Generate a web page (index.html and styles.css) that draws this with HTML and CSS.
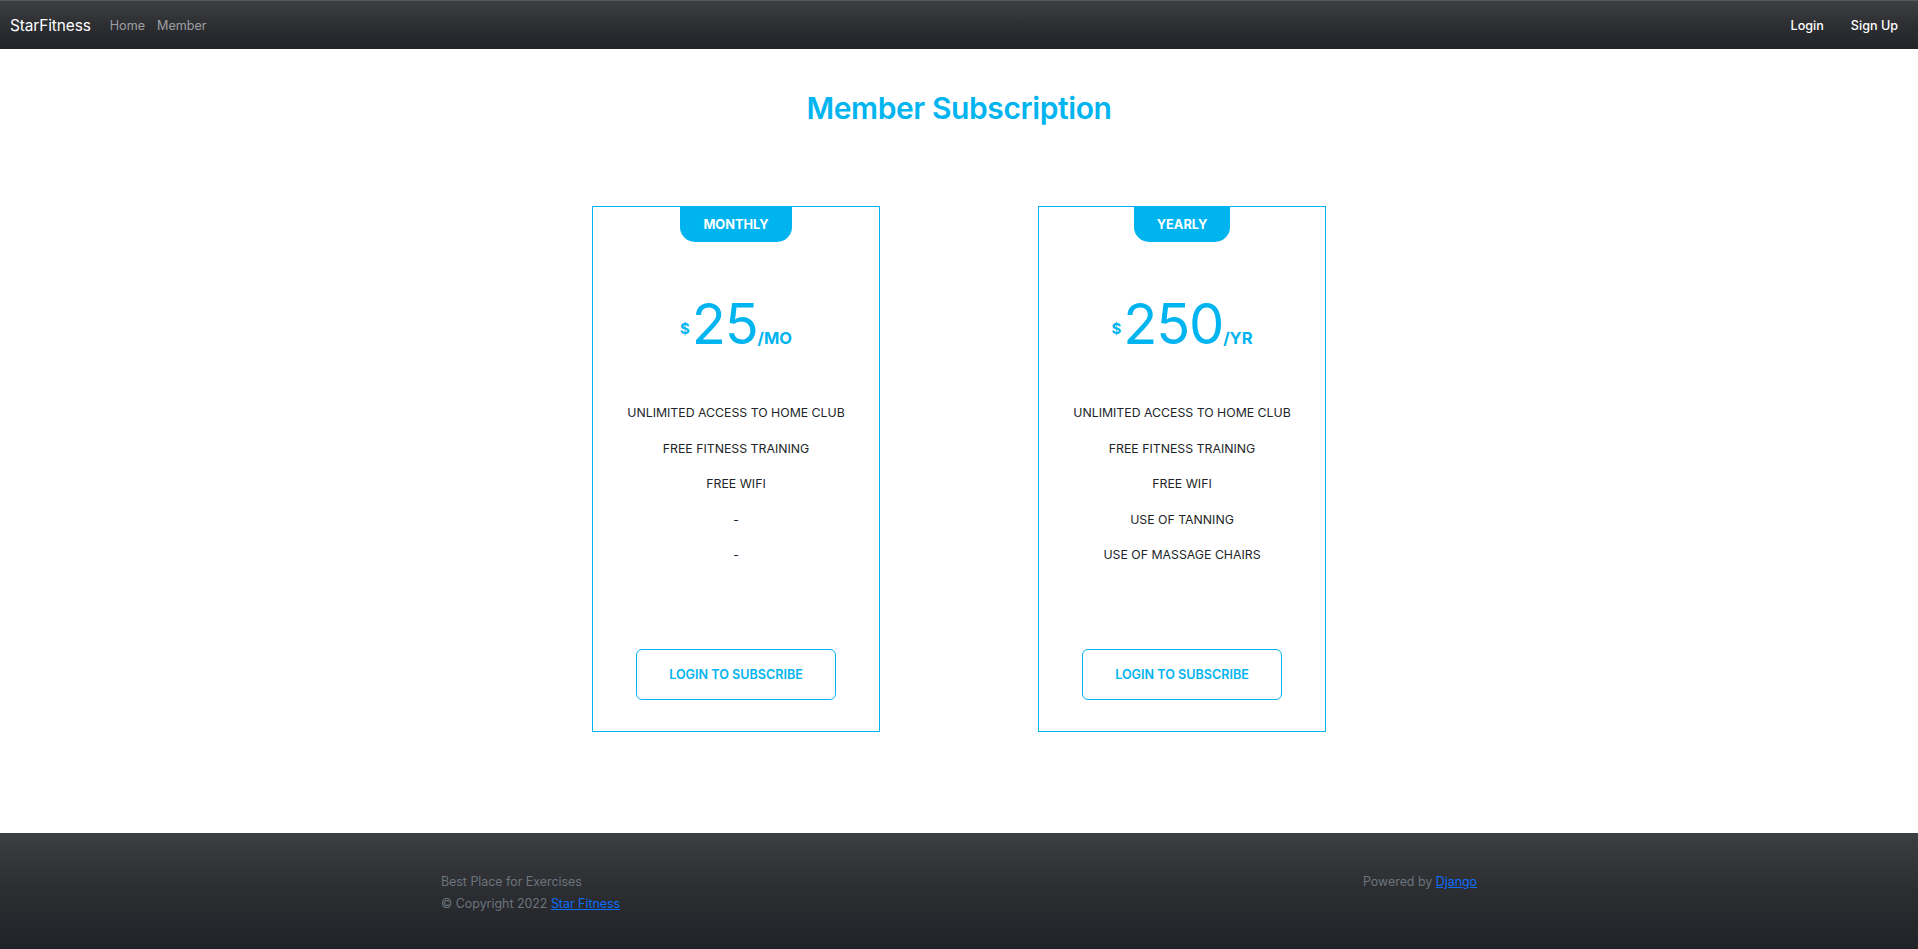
FILE: index.html
```html
<!DOCTYPE html>
<html lang="en">
<head>
<meta charset="utf-8">
<title>StarFitness</title>
<link rel="stylesheet" href="styles.css">
</head>
<body>
<nav class="navbar">
  <div class="nav-left">
    <a class="brand" href="#">StarFitness</a>
    <a class="nav-link" href="#">Home</a>
    <a class="nav-link" href="#">Member</a>
  </div>
  <div class="nav-right">
    <a class="nav-link light" href="#">Login</a>
    <a class="nav-link light" href="#">Sign Up</a>
  </div>
</nav>
<main class="main">
  <h1 class="title">Member Subscription</h1>
  <div class="plans">
    <div class="card">
      <div class="badge">MONTHLY</div>
      <div class="price"><span class="cur">$</span><span class="amount">25</span><span class="per">/MO</span></div>
      <ul class="features">
        <li>UNLIMITED ACCESS TO HOME CLUB</li>
        <li>FREE FITNESS TRAINING</li>
        <li>FREE WIFI</li>
        <li>-</li>
        <li>-</li>
      </ul>
      <a class="btn" href="#">LOGIN TO SUBSCRIBE</a>
    </div>
    <div class="card">
      <div class="badge">YEARLY</div>
      <div class="price"><span class="cur">$</span><span class="amount">250</span><span class="per">/YR</span></div>
      <ul class="features">
        <li>UNLIMITED ACCESS TO HOME CLUB</li>
        <li>FREE FITNESS TRAINING</li>
        <li>FREE WIFI</li>
        <li>USE OF TANNING</li>
        <li>USE OF MASSAGE CHAIRS</li>
      </ul>
      <a class="btn" href="#">LOGIN TO SUBSCRIBE</a>
    </div>
  </div>
</main>
<footer class="footer">
  <div class="footer-inner">
    <div class="footer-left">
      <div>Best Place for Exercises</div>
      <div>&copy; Copyright 2022 <a href="#">Star Fitness</a></div>
    </div>
    <div class="footer-right">Powered by <a href="#">Django</a></div>
  </div>
</footer>
</body>
</html>
```
FILE: styles.css
```css
* { box-sizing: border-box; }
html, body { margin: 0; padding: 0; }
body {
  font-family: Inter, Roboto, "Liberation Sans", sans-serif;
  color: #212529;
  background: #fff;
  height: 949px;
  overflow: hidden;
}
a { text-decoration: none; }

.navbar {
  height: 49px;
  display: flex;
  align-items: center;
  justify-content: space-between;
  padding: 0 20px 0 10px;
  background: linear-gradient(to bottom, #3d3f43 0%, #2c2e32 50%, #212428 100%);
  border-top: 1px solid #55575b;
}
.nav-left, .nav-right { display: flex; align-items: center; }
.brand {
  color: #fff;
  font-size: 15.4px;
  margin-right: 19px;
  letter-spacing: -0.1px;
}
.nav-link {
  color: rgba(255,255,255,0.55);
  font-size: 12.6px;
  margin-right: 12px;
}
.nav-right .nav-link { margin-right: 0; margin-left: 27px; }
.nav-link.light { color: #fff; font-weight: 500; }

.main {
  height: 784px;
  padding-top: 40px;
}
.title {
  margin: 0;
  text-align: center;
  font-size: 30px;
  line-height: 38px;
  font-weight: 600;
  letter-spacing: -0.4px;
  color: #00b4f0;
}
.plans {
  margin-top: 79px;
  display: flex;
  justify-content: center;
  gap: 158px;
}
.card {
  width: 288px;
  height: 526px;
  border: 1px solid #00b4f0;
  display: flex;
  flex-direction: column;
  align-items: center;
}
.badge {
  height: 35px;
  padding: 0 23px;
  background: #00b4f0;
  color: #fff;
  font-size: 12.8px;
  font-weight: 700;
  display: flex;
  align-items: center;
  border-radius: 0 0 15px 15px;
}
.price {
  margin-top: 53px;
  height: 58px;
  line-height: 58px;
  color: #00b4f0;
  white-space: nowrap;
}
.cur {
  font-size: 15px;
  font-weight: 700;
  vertical-align: 10px;
  margin-right: 2px;
}
.amount {
  font-size: 56px;
  font-weight: 400;
  letter-spacing: -1.2px;
}
.per {
  font-size: 16.5px;
  font-weight: 700;
}
.features {
  list-style: none;
  margin: 42px 0 0;
  padding: 0;
  text-align: center;
  font-size: 12.3px;
  line-height: 35.5px;
}
.btn {
  margin-top: auto;
  margin-bottom: 31px;
  width: 200px;
  height: 51px;
  border: 1px solid #00b4f0;
  border-radius: 6px;
  color: #00b4f0;
  font-size: 12.6px;
  font-weight: 600;
  display: flex;
  align-items: center;
  justify-content: center;
}

.footer {
  height: 116px;
  background: linear-gradient(to bottom, #3c3e42 0%, #2b2d31 50%, #1f2226 100%);
  padding-top: 38px;
}
.footer-inner {
  width: 1036px;
  margin: 0 auto;
  display: flex;
  justify-content: space-between;
  align-items: flex-start;
  font-size: 12.4px;
  line-height: 21.6px;
  color: #6c757d;
}
.footer a { color: #0d6efd; text-decoration: underline; }
```
